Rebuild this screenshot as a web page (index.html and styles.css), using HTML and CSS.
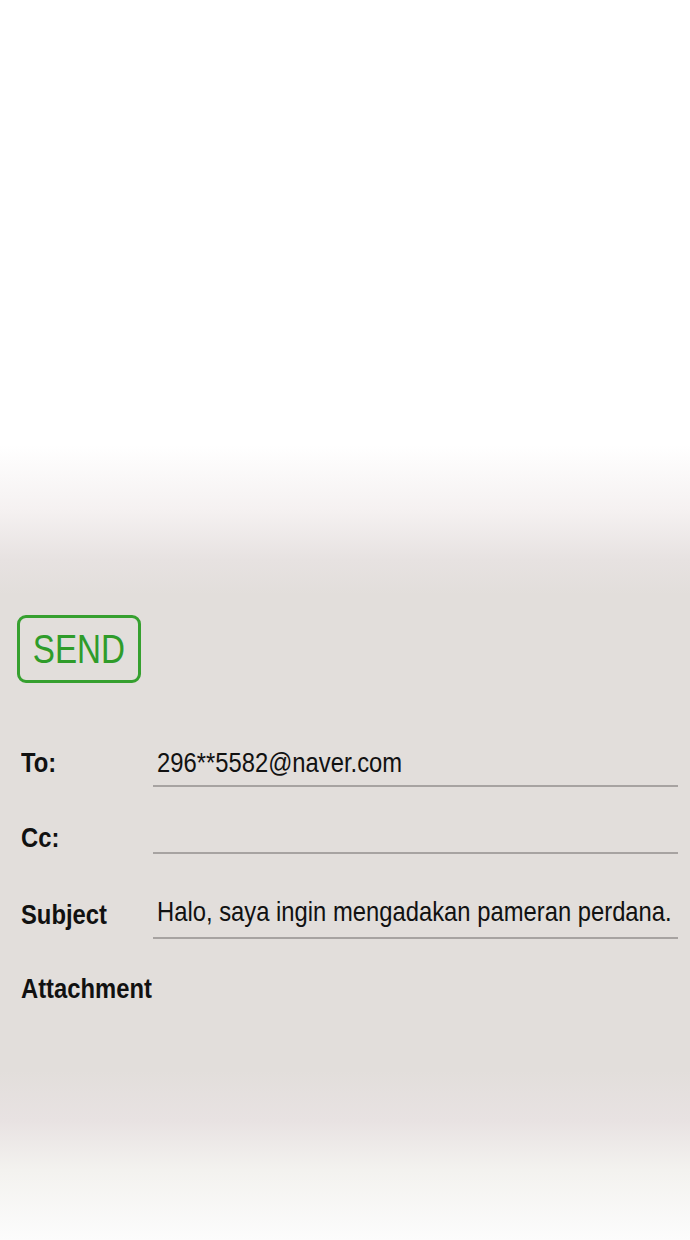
FILE: index.html
```html
<!DOCTYPE html>
<html lang="id">
<head>
<meta charset="utf-8">
<title>Send mail</title>
<link rel="stylesheet" href="styles.css">
</head>
<body>
<div class="page">
  <div class="form">
    <div class="send-wrap">
      <div class="send-btn"><span class="send-text">SEND</span></div>
    </div>
    <div class="row row-to">
      <div class="label"><span class="narrow">To:</span></div>
      <div class="field"><span class="narrow">296**5582@naver.com</span></div>
    </div>
    <div class="row row-cc">
      <div class="label label-cc"><span class="narrow">Cc:</span></div>
      <div class="field"><span class="narrow">&nbsp;</span></div>
    </div>
    <div class="row row-subject">
      <div class="label label-subject"><span class="narrow">Subject</span></div>
      <div class="field field-subject"><span class="narrow">Halo, saya ingin mengadakan pameran perdana.</span></div>
    </div>
    <div class="row row-attach">
      <div class="label"><span class="narrow">Attachment</span></div>
    </div>
  </div>
</div>
</body>
</html>
```
FILE: styles.css
```css
html, body {
  margin: 0;
  padding: 0;
}
body {
  font-family: "Liberation Sans", Arial, sans-serif;
  color: #111;
  overflow-x: hidden;
}
.page {
  min-height: 1240px;
  background: linear-gradient(to bottom,
    #ffffff 0px,
    #ffffff 445px,
    #f5f1f1 510px,
    #e7e2e1 560px,
    #e2dedb 595px,
    #e2dedb 1070px,
    #e8e2e2 1120px,
    #f3f2ef 1170px,
    #fcfcfc 1240px);
}
.form {
  padding: 615px 12px 0 21px;
}
.send-wrap {
  margin-left: -4px;
}
.send-btn {
  width: 118px;
  height: 62px;
  border: 3px solid #36a02f;
  border-radius: 9px;
  display: flex;
  align-items: center;
  justify-content: center;
}
.send-text {
  display: inline-block;
  font-size: 41px;
  line-height: 41px;
  color: #2f9c2a;
  transform: scaleX(0.81);
  transform-origin: center;
}
.row {
  display: flex;
  align-items: flex-start;
}
.row-to { margin-top: 64px; }
.row-cc { margin-top: 27px; }
.row-subject { margin-top: 42px; }
.row-attach { margin-top: 34px; }
.label {
  width: 132px;
  flex: none;
  font-weight: bold;
  font-size: 28px;
  line-height: 32px;
  white-space: nowrap;
  overflow: visible;
}
.label-cc { padding-top: 8px; }
.label-subject { padding-top: 3px; }
.field {
  width: 521px;
  flex: none;
  padding: 0 0 6px 4px;
  border-bottom: 2px solid #a7a3a1;
  font-size: 28px;
  line-height: 32px;
  white-space: nowrap;
  overflow: hidden;
}
.field-subject { padding-bottom: 9px; }
.narrow {
  display: inline-block;
  transform: scaleX(0.85);
  transform-origin: left center;
}
```
